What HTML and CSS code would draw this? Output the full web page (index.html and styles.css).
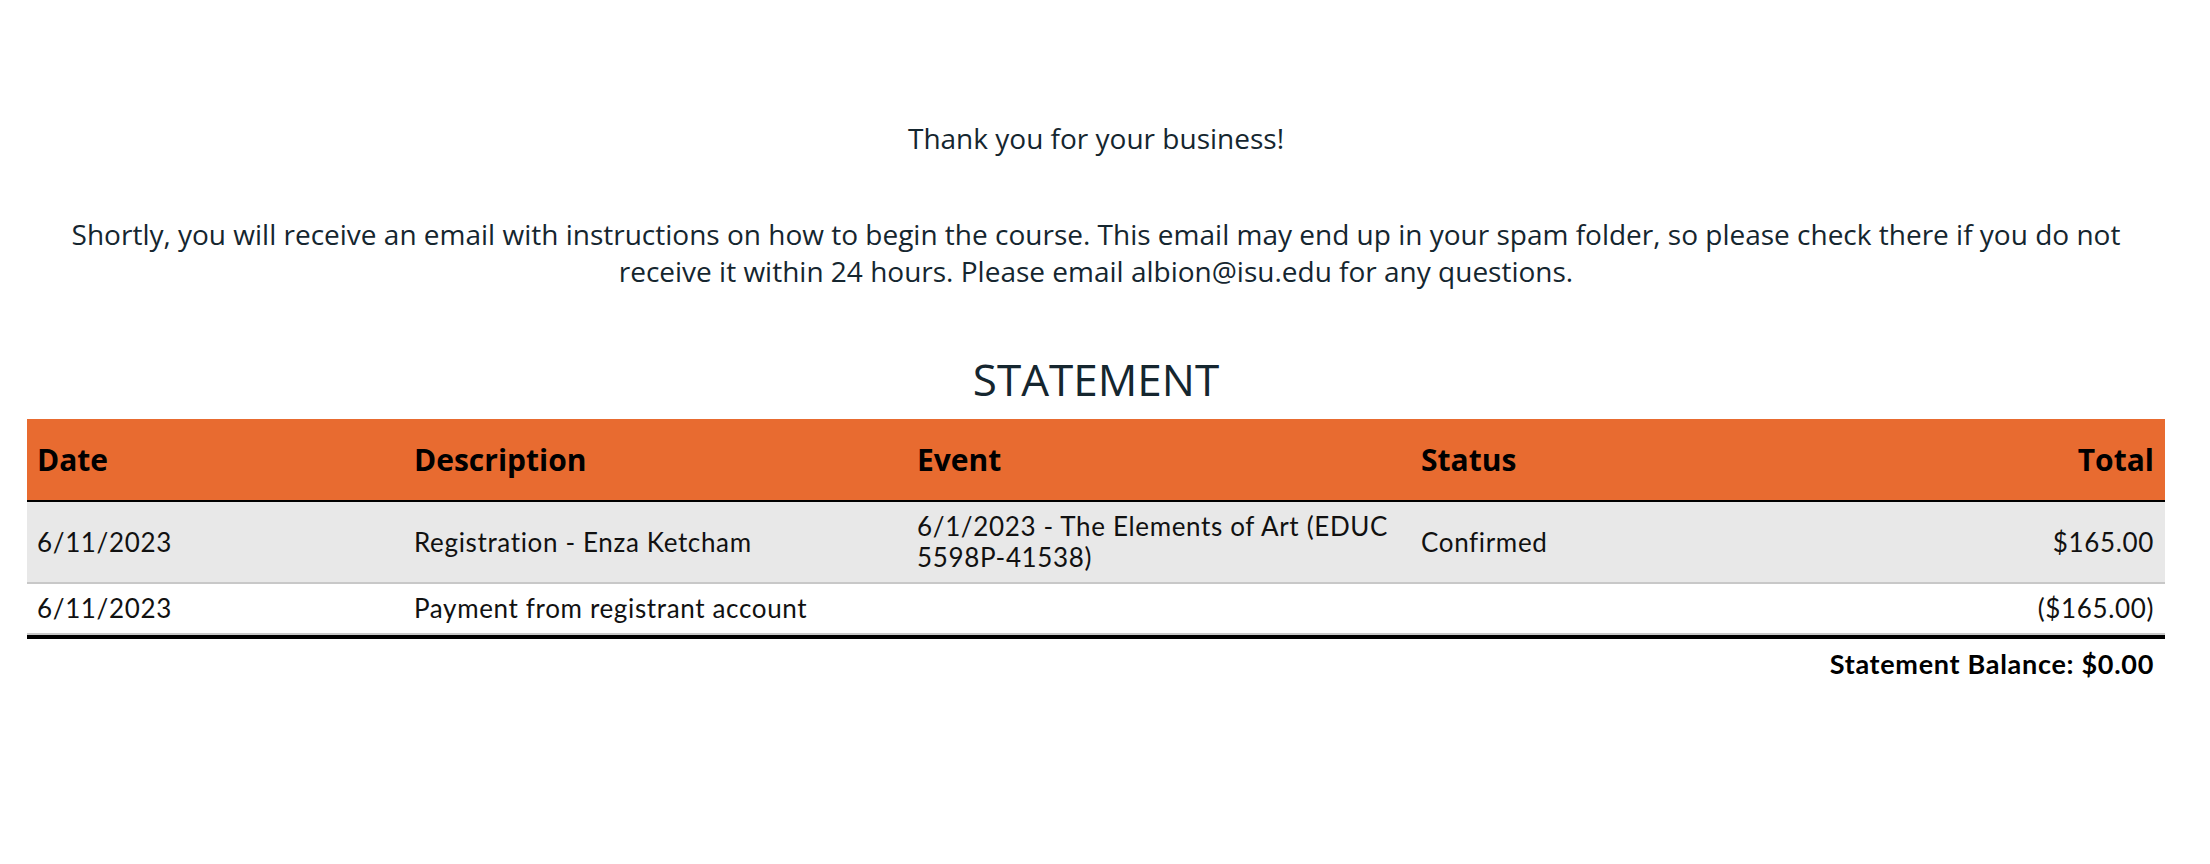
FILE: index.html
```html
<!DOCTYPE html>
<html lang="en">
<head>
    <meta charset="UTF-8">
    <meta name="viewport" content="width=device-width, initial-scale=1.0">
    <title>Registration Complete</title>
    <link rel="stylesheet" href="styles.css">
</head>
<body>
    <div class="page">
        <p class="thanks">Thank you for your business!</p>
        <p class="notice">Shortly, you will receive an email with instructions on how to begin the course. This email may end up in your spam folder, so please check there if you do not receive it within 24 hours. Please email albion@isu.edu for any questions.</p>

        <h2 class="statement-title">STATEMENT</h2>
        <table class="statement">
            <thead>
                <tr>
                    <th class="col-date">Date</th>
                    <th class="col-desc">Description</th>
                    <th class="col-event">Event</th>
                    <th class="col-status">Status</th>
                    <th class="col-total">Total</th>
                </tr>
            </thead>
            <tbody>
                <tr class="shaded">
                    <td>6/11/2023</td>
                    <td>Registration - Enza Ketcham</td>
                    <td>6/1/2023 - The Elements of Art (EDUC 5598P-41538)</td>
                    <td>Confirmed</td>
                    <td class="col-total">$165.00</td>
                </tr>
                <tr>
                    <td>6/11/2023</td>
                    <td>Payment from registrant account</td>
                    <td></td>
                    <td></td>
                    <td class="col-total">($165.00)</td>
                </tr>
            </tbody>
        </table>
        <div class="balance">Statement Balance: $0.00</div>
    </div>
</body>
</html>
```

FILE: styles.css
```css
body {
    margin: 0;
    padding: 0;
    background: #fff;
    font-family: "Open Sans", Arial, sans-serif;
    color: #15262f;
}
.page {
    padding: 120px 45px 0 27px;
}
.thanks,
.notice {
    font-size: 28px;
    line-height: 37px;
    text-align: center;
    margin: 0;
    padding: 0 10px;
}
.notice {
    margin-top: 59px;
}
.statement-title {
    font-size: 44px;
    font-weight: normal;
    line-height: 53px;
    text-align: center;
    margin: 63px 0 13px;
    color: #15262f;
}
.statement {
    width: 100%;
    border-collapse: separate;
    border-spacing: 0;
    border-bottom: 4px solid #000;
    font-family: Lato, "Open Sans", sans-serif;
    font-size: 26px;
    letter-spacing: 0.65px;
    color: #111;
}
.statement th {
    background-color: #e86b30;
    font-family: "Open Sans", Arial, sans-serif;
    font-weight: bold;
    font-size: 30px;
    letter-spacing: 0;
    line-height: 41px;
    text-align: left;
    padding: 20px 10px;
    border-bottom: 2px solid #000;
    color: #000;
}
.statement td {
    padding: 9px 10px;
    line-height: 31px;
    vertical-align: middle;
    border-bottom: 2px solid #c8c8c8;
}
.statement .col-total {
    text-align: right;
    padding-right: 11px;
}
.shaded td {
    background-color: #e8e8e8;
}
.col-date { width: 357px; }
.col-desc { width: 483px; }
.col-event { width: 484px; }
.col-status { width: 483px; }
.balance {
    font-family: Lato, "Open Sans", sans-serif;
    font-weight: bold;
    font-size: 27px;
    letter-spacing: 0.7px;
    line-height: 31px;
    text-align: right;
    margin-top: 9px;
    padding-right: 11px;
    color: #000;
}
```
